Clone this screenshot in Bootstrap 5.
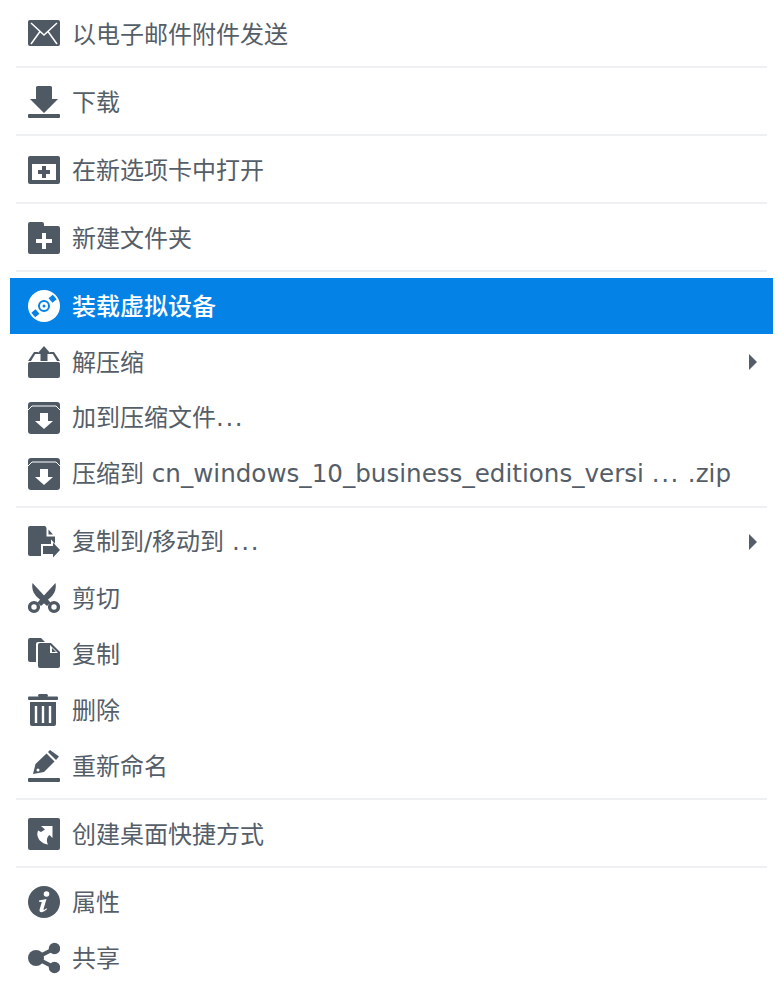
<!DOCTYPE html>
<html lang="zh-CN">
<head>
  <meta charset="UTF-8" />
  <meta name="viewport" content="width=device-width, initial-scale=1.0" />
  <title>Context Menu</title>
  <link href="https://cdn.jsdelivr.net/npm/bootstrap@5.3.0/dist/css/bootstrap.min.css" rel="stylesheet" />
  <style>
    body {
      background-color: #fff;
      font-family: "DejaVu Sans", "Noto Sans CJK SC", sans-serif;
    }

    .file-menu {
      --bs-dropdown-link-active-bg: #0582e6;
      width: 763px;
      min-width: 0;
      margin: 6px 0 0 10px;
      padding: 0;
      border: 0;
      border-radius: 0;
      background: transparent;
    }

    .file-menu .dropdown-item {
      height: 56px;
      padding: 0 16px 0 18px;
      gap: 12px;
      font-size: 24px;
      color: #555e68;
    }

    .file-menu .dropdown-item.active {
      color: #fff;
      font-weight: 500;
      background-color: #0582e6;
    }

    .file-menu .dropdown-divider {
      height: 2px;
      margin: 4px 6px 6px;
      border: 0;
      background-color: #eef0f1;
      opacity: 1;
    }

    .item-label {
      padding-top: 1px;
    }

    .latin-run {
      font-size: 24.6px;
    }

    .dot-run {
      font-size: 24.6px;
      letter-spacing: 1.6px;
    }

    .menu-icon {
      flex: 0 0 32px;
      width: 32px;
      height: 32px;
      fill: #4f5964;
    }

    .sub-arrow {
      width: 0;
      height: 0;
      border-top: 8px solid transparent;
      border-bottom: 8px solid transparent;
      border-left: 8px solid #555e68;
    }
  </style>
</head>

<body>

  <ul class="dropdown-menu show d-block position-static file-menu list-unstyled">
    <li><a class="dropdown-item d-flex align-items-center" href="#">
      <svg class="menu-icon" viewBox="0 0 32 32"><rect y="2" width="32" height="26" rx="2"/><path d="M3 5l13 12L29 5M3 26l9-12.500M29 26l-9-12.500" fill="none" stroke="#fff" stroke-width="1.500"/></svg>
      <span class="item-label">以电子邮件附件发送</span></a></li>
    <li><hr class="dropdown-divider"></li>
    <li><a class="dropdown-item d-flex align-items-center" href="#">
      <svg class="menu-icon" viewBox="0 0 32 32"><path d="M9.500 0h13a1.500 1.500 0 0 1 1.500 1.500V13h6L16 27 2 13h6V1.500A1.500 1.500 0 0 1 9.500 0z"/><rect y="28" width="32" height="4" rx="1"/></svg>
      <span class="item-label">下载</span></a></li>
    <li><hr class="dropdown-divider"></li>
    <li><a class="dropdown-item d-flex align-items-center" href="#">
      <svg class="menu-icon" viewBox="0 0 32 32"><path fill-rule="evenodd" d="M2 2h28a2 2 0 0 1 2 2v24a2 2 0 0 1-2 2H2a2 2 0 0 1-2-2V4a2 2 0 0 1 2-2zm2 8v16h24V10z"/><path d="M14 12h4v4h4v4h-4v4h-4v-4h-4v-4h4z"/></svg>
      <span class="item-label">在新选项卡中打开</span></a></li>
    <li><hr class="dropdown-divider"></li>
    <li><a class="dropdown-item d-flex align-items-center" href="#">
      <svg class="menu-icon" viewBox="0 0 32 32"><path d="M2 0h12a2 2 0 0 1 2 2v2h14a2 2 0 0 1 2 2v24a2 2 0 0 1-2 2H2a2 2 0 0 1-2-2V2a2 2 0 0 1 2-2z"/><path d="M14 11h4v6h6v4h-6v6h-4v-6H8v-4h6z" fill="#fff"/></svg>
      <span class="item-label">新建文件夹</span></a></li>
    <li><hr class="dropdown-divider"></li>
    <li><a class="dropdown-item d-flex align-items-center active" href="#">
      <svg class="menu-icon" viewBox="0 0 32 32"><circle cx="16" cy="16" r="16" fill="#fff"/><g fill="#0582e6" transform="rotate(-40 16 16)"><rect x="24.500" y="13" width="5.500" height="6"/><rect x="2" y="13" width="5.500" height="6"/></g><circle cx="16" cy="16" r="5" fill="none" stroke="#0582e6" stroke-width="2"/><circle cx="16" cy="16" r="1.500" fill="#0582e6"/></svg>
      <span class="item-label">装载虚拟设备</span></a></li>
    <li><a class="dropdown-item d-flex align-items-center" href="#">
      <svg class="menu-icon" viewBox="0 0 32 32"><path d="M16 0l7 8h-3.500v7h-7V8H9z"/><path d="M2 16h28a2 2 0 0 1 2 2v12a2 2 0 0 1-2 2H2a2 2 0 0 1-2-2V18a2 2 0 0 1 2-2z"/><path d="M0 15L6 6h4v2H7.200L3 15zM32 15L26 6h-4v2h2.800L29 15z"/></svg>
      <span class="item-label">解压缩</span><span class="sub-arrow ms-auto"></span></a></li>
    <li><a class="dropdown-item d-flex align-items-center" href="#">
      <svg class="menu-icon" viewBox="0 0 32 32"><rect width="32" height="32" rx="3"/><path d="M0 8l4-4h24l4 4" fill="none" stroke="#fff" stroke-width="1"/><path d="M12 11h8v8h5L16 27 7 19h5z" fill="#fff"/></svg>
      <span class="item-label">加到压缩文件<span class="dot-run">...</span></span></a></li>
    <li><a class="dropdown-item d-flex align-items-center" href="#">
      <svg class="menu-icon" viewBox="0 0 32 32"><rect width="32" height="32" rx="3"/><path d="M0 8l4-4h24l4 4" fill="none" stroke="#fff" stroke-width="1"/><path d="M12 11h8v8h5L16 27 7 19h5z" fill="#fff"/></svg>
      <span class="item-label">压缩到<span class="latin-run"> cn_windows_10_business_editions_versi </span><span class="dot-run">...</span><span class="latin-run"> .zip</span></span></a></li>
    <li><hr class="dropdown-divider"></li>
    <li><a class="dropdown-item d-flex align-items-center" href="#">
      <svg class="menu-icon" viewBox="0 0 32 32"><path d="M2 0h15l10 10v20H2a2 2 0 0 1-2-2V2a2 2 0 0 1 2-2z"/><path d="M18.500 .5l8.500 8.500v1.500h-8.500z" fill="#fff"/><path d="M20.500 3.500l4.500 5h-4.500z"/><path d="M13 18h10v-4.500l10 10.500-10 10.500V30H13z" fill="#fff"/><path d="M15 20h10v-3.500l7 7.500-7 7.500V28H15z"/></svg>
      <span class="item-label">复制到/移动到<span class="latin-run"> </span><span class="dot-run">...</span></span><span class="sub-arrow ms-auto"></span></a></li>
    <li><a class="dropdown-item d-flex align-items-center" href="#">
      <svg class="menu-icon" viewBox="0 0 32 32"><path d="M4.500 1l18 19.500-3.500 3.500L9 15C5 11 3.500 6 4.500 1z"/><path d="M27.500 1l-18 19.500 3.500 3.500L23 15C27 11 28.500 6 27.500 1z"/><circle cx="6" cy="25" r="4.400" fill="none" stroke="#4f5964" stroke-width="3.400"/><circle cx="26" cy="25" r="4.400" fill="none" stroke="#4f5964" stroke-width="3.400"/></svg>
      <span class="item-label">剪切</span></a></li>
    <li><a class="dropdown-item d-flex align-items-center" href="#">
      <svg class="menu-icon" viewBox="0 0 32 32"><path d="M2 0h11l4 4H10a2 2 0 0 0-2 2v18H2a2 2 0 0 1-2-2V2a2 2 0 0 1 2-2z"/><path d="M12 5h11l9 9v14a2 2 0 0 1-2 2H12a2 2 0 0 1-2-2V7a2 2 0 0 1 2-2z"/><path d="M22 7l8 8h-8z" fill="#fff"/><path d="M24 10l4 4h-4z"/></svg>
      <span class="item-label">复制</span></a></li>
    <li><a class="dropdown-item d-flex align-items-center" href="#">
      <svg class="menu-icon" viewBox="0 0 32 32"><rect x="10" y="0" width="10" height="3" rx="1.500"/><rect y="2.500" width="30" height="3.500" rx="1"/><path d="M2 8h26v22a2 2 0 0 1-2 2H4a2 2 0 0 1-2-2z"/><path d="M6.800 12h2.400v17H6.800zM13.800 12h2.400v17h-2.400zM20.800 12h2.400v17h-2.400z" fill="#fff"/></svg>
      <span class="item-label">删除</span></a></li>
    <li><a class="dropdown-item d-flex align-items-center" href="#">
      <svg class="menu-icon" viewBox="0 0 32 32"><path d="M5 24l2.500-10L18.500 3.500l8 8L16 22z"/><path d="M20 2l2-2 9 6.500-3 3.500z"/><circle cx="10" cy="20" r="1.500" fill="#fff"/><rect y="28" width="32" height="4" rx="1"/></svg>
      <span class="item-label">重新命名</span></a></li>
    <li><hr class="dropdown-divider"></li>
    <li><a class="dropdown-item d-flex align-items-center" href="#">
      <svg class="menu-icon" viewBox="0 0 32 32"><rect width="32" height="32" rx="2"/><path d="M13 8h11.500v12l-3-3c-2.500 2-3.500 5.500-1.500 9.500C14 26 7 20 10 12.500l3 1.500 4-2.500z" fill="#fff"/></svg>
      <span class="item-label">创建桌面快捷方式</span></a></li>
    <li><hr class="dropdown-divider"></li>
    <li><a class="dropdown-item d-flex align-items-center" href="#">
      <svg class="menu-icon" viewBox="0 0 32 32"><circle cx="16" cy="16" r="16"/><circle cx="18.500" cy="8" r="2.800" fill="#fff"/><path d="M11 14.500l7.500-1.500-3 10c-.3 1 .6 1.300 2.800-.8l.8.8c-3 3.500-8.500 4.800-7.500.5l2.200-7.500-2.800-.3z" fill="#fff"/></svg>
      <span class="item-label">属性</span></a></li>
    <li><a class="dropdown-item d-flex align-items-center" href="#">
      <svg class="menu-icon" viewBox="0 0 32 32"><circle cx="8" cy="16" r="8"/><circle cx="26.500" cy="6.500" r="5.700"/><circle cx="26.500" cy="25.500" r="5.700"/><path d="M8 16L26.500 6.500M8 16l18.500 9.500" stroke="#4f5964" stroke-width="4"/></svg>
      <span class="item-label">共享</span></a></li>
  </ul>

  <script src="https://cdn.jsdelivr.net/npm/bootstrap@5.3.0/dist/js/bootstrap.bundle.min.js"></script>
</body>
</html>
